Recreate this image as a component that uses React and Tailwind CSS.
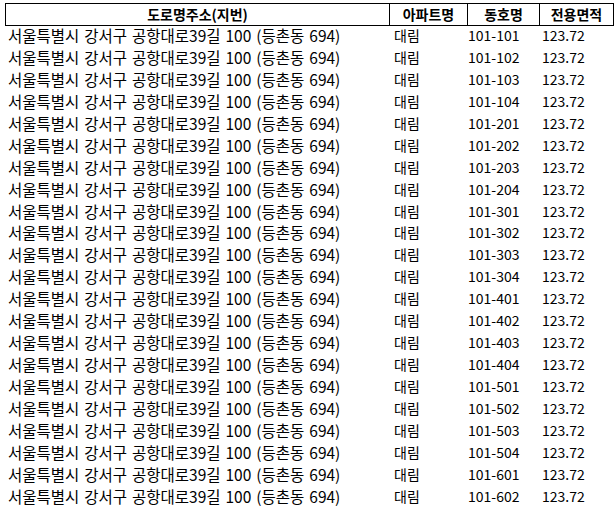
import React from "react";

const units = [
  "101-101","101-102","101-103","101-104",
  "101-201","101-202","101-203","101-204",
  "101-301","101-302","101-303","101-304",
  "101-401","101-402","101-403","101-404",
  "101-501","101-502","101-503","101-504",
  "101-601","101-602",
];

export default function App() {
  return (
    <div
      className="w-[615px] h-[506px] bg-white text-black text-[14px] overflow-hidden"
      style={{ fontFamily: '"Noto Sans CJK KR", "Noto Sans", sans-serif' }}
    >
      <div className="pt-[3px] pl-[5px]">
        <div className="flex w-[609px] h-[23px] border border-black font-bold leading-[21px]">
          <div className="w-[383px] text-center">도로명주소(지번)</div>
          <div className="w-[78px] border-l border-black text-center">아파트명</div>
          <div className="w-[72px] border-l border-black text-center">동호명</div>
          <div className="w-[74px] border-l border-black text-center">전용면적</div>
        </div>
        <div className="flex flex-col -mt-[1px]">
          {units.map((u) => (
            <div key={u} className="flex h-[21.95px] leading-[21.95px] whitespace-nowrap">
              <div className="w-[384px] pl-[3px] text-[15.5px] [word-spacing:1.5px]">서울특별시 강서구 공항대로39길 100 (등촌동 694)</div>
              <div className="w-[78px] pl-[5px]">대림</div>
              <div className="w-[72px] pl-[1px]">{u}</div>
              <div className="w-[74px] pl-[3px]">123.72</div>
            </div>
          ))}
        </div>
      </div>
    </div>
  );
}
